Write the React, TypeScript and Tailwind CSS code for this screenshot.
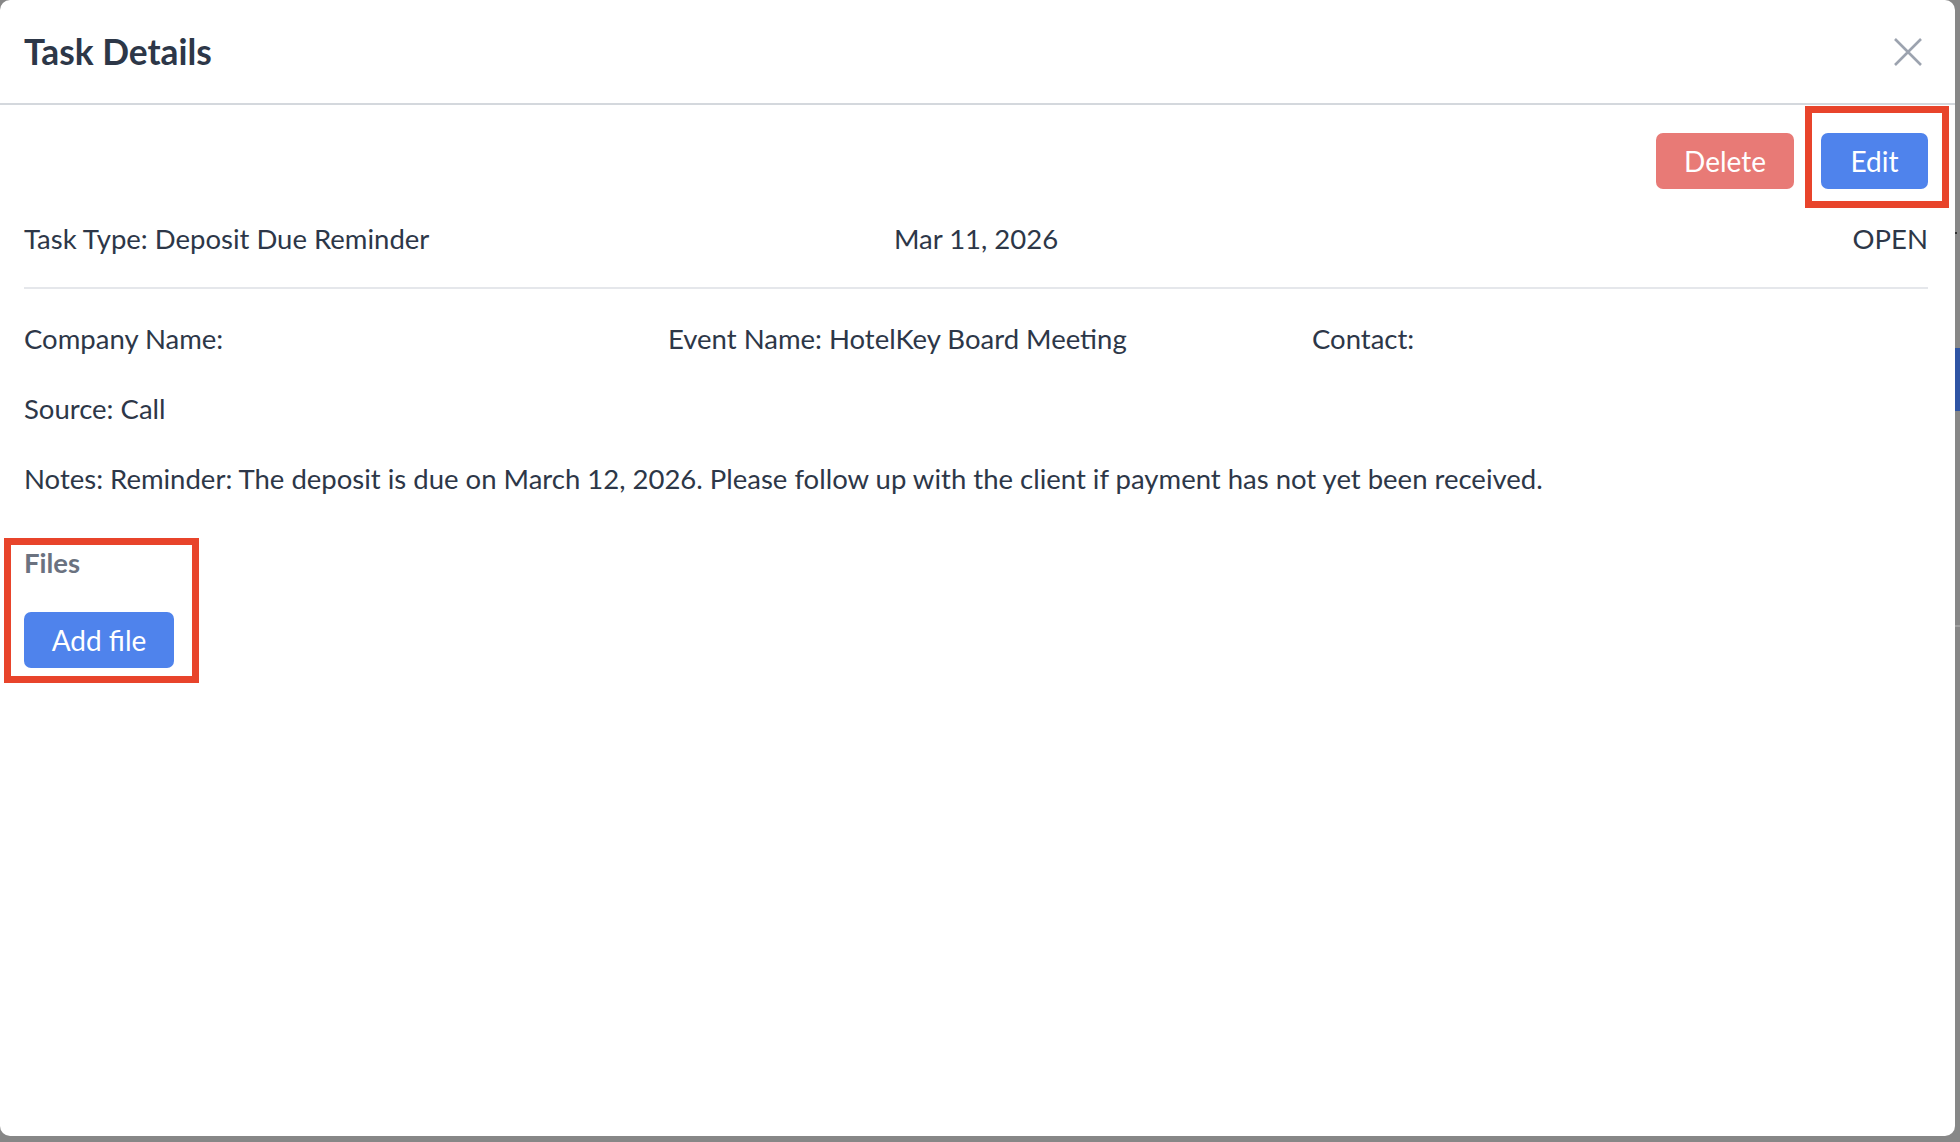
import React from 'react';

const font = { fontFamily: 'Lato, "Noto Sans", sans-serif' };

const CloseIcon: React.FC = () => (
  <svg width="28" height="28" viewBox="0 0 28 28" fill="none">
    <path d="M1 1 L27 27 M27 1 L1 27" stroke="#9ca3af" strokeWidth="2.6" strokeLinecap="butt" />
  </svg>
);

const App: React.FC = () => {
  return (
    <div className="w-[1960px] h-[1142px] bg-[#878787] flex overflow-hidden" style={font}>
      <div className="relative w-[1955px] h-[1136px] bg-white rounded-[10px] flex flex-col text-[#2d3748]">
        {/* header */}
        <div className="h-[105px] flex items-center justify-between pl-[24px] pr-[33px] border-b-2 border-[#d4d8dd] shrink-0">
          <h2 className="text-[35.3px] font-bold leading-none text-[#2d3748]">Task Details</h2>
          <button className="p-0">
            <CloseIcon />
          </button>
        </div>

        {/* body */}
        <div className="pl-[24px] pr-[27px] pt-[28px] text-[27.5px] leading-[42px]">
          <div className="flex justify-end gap-[27px]">
            <button className="w-[138px] h-[56px] rounded-[7px] bg-[#e87a76] text-white text-[28px]">Delete</button>
            <button className="w-[107px] h-[56px] rounded-[7px] bg-[#4f83ec] text-white text-[28px]">Edit</button>
          </div>

          <div className="mt-[29px] grid grid-cols-3 gap-x-[28px] pb-[27px] border-b-2 border-[#e5e7eb]">
            <div>Task Type: Deposit Due Reminder</div>
            <div className="text-center">Mar 11, 2026</div>
            <div className="text-right">OPEN</div>
          </div>

          <div className="mt-[29px] flex flex-col gap-[28px]">
            <div className="grid grid-cols-3 gap-x-[28px]">
              <div>Company Name:</div>
              <div>Event Name: HotelKey Board Meeting</div>
              <div>Contact:</div>
            </div>
            <div>Source: Call</div>
            <div>
              Notes: Reminder: The deposit is due on March 12, 2026. Please follow up with the client if payment has not yet been received.
            </div>
          </div>

          <div className="mt-[42px]">
            <div className="font-bold text-[#6b7280]">Files</div>
            <button className="mt-[28px] w-[150px] h-[56px] rounded-[7px] bg-[#4f83ec] text-white text-[28px]">Add file</button>
          </div>
        </div>

        {/* annotation boxes */}
        <div className="absolute left-[1805px] top-[106px] w-[144px] h-[102px] border-[7px] border-[#e8442b]" />
        <div className="absolute left-[4px] top-[538px] w-[195px] h-[145px] border-[7px] border-[#e8442b]" />
      </div>

      {/* backdrop sliver */}
      <div className="flex-1 flex flex-col">
        <div className="mt-[232px] h-[2px] w-[2px] bg-[#333]" />
        <div className="mt-[114px] h-[63px] bg-[#2f55a4]" />
        <div className="mt-[214px] h-[2px] bg-[#a0a0a0]" />
      </div>
    </div>
  );
};

export default App;
